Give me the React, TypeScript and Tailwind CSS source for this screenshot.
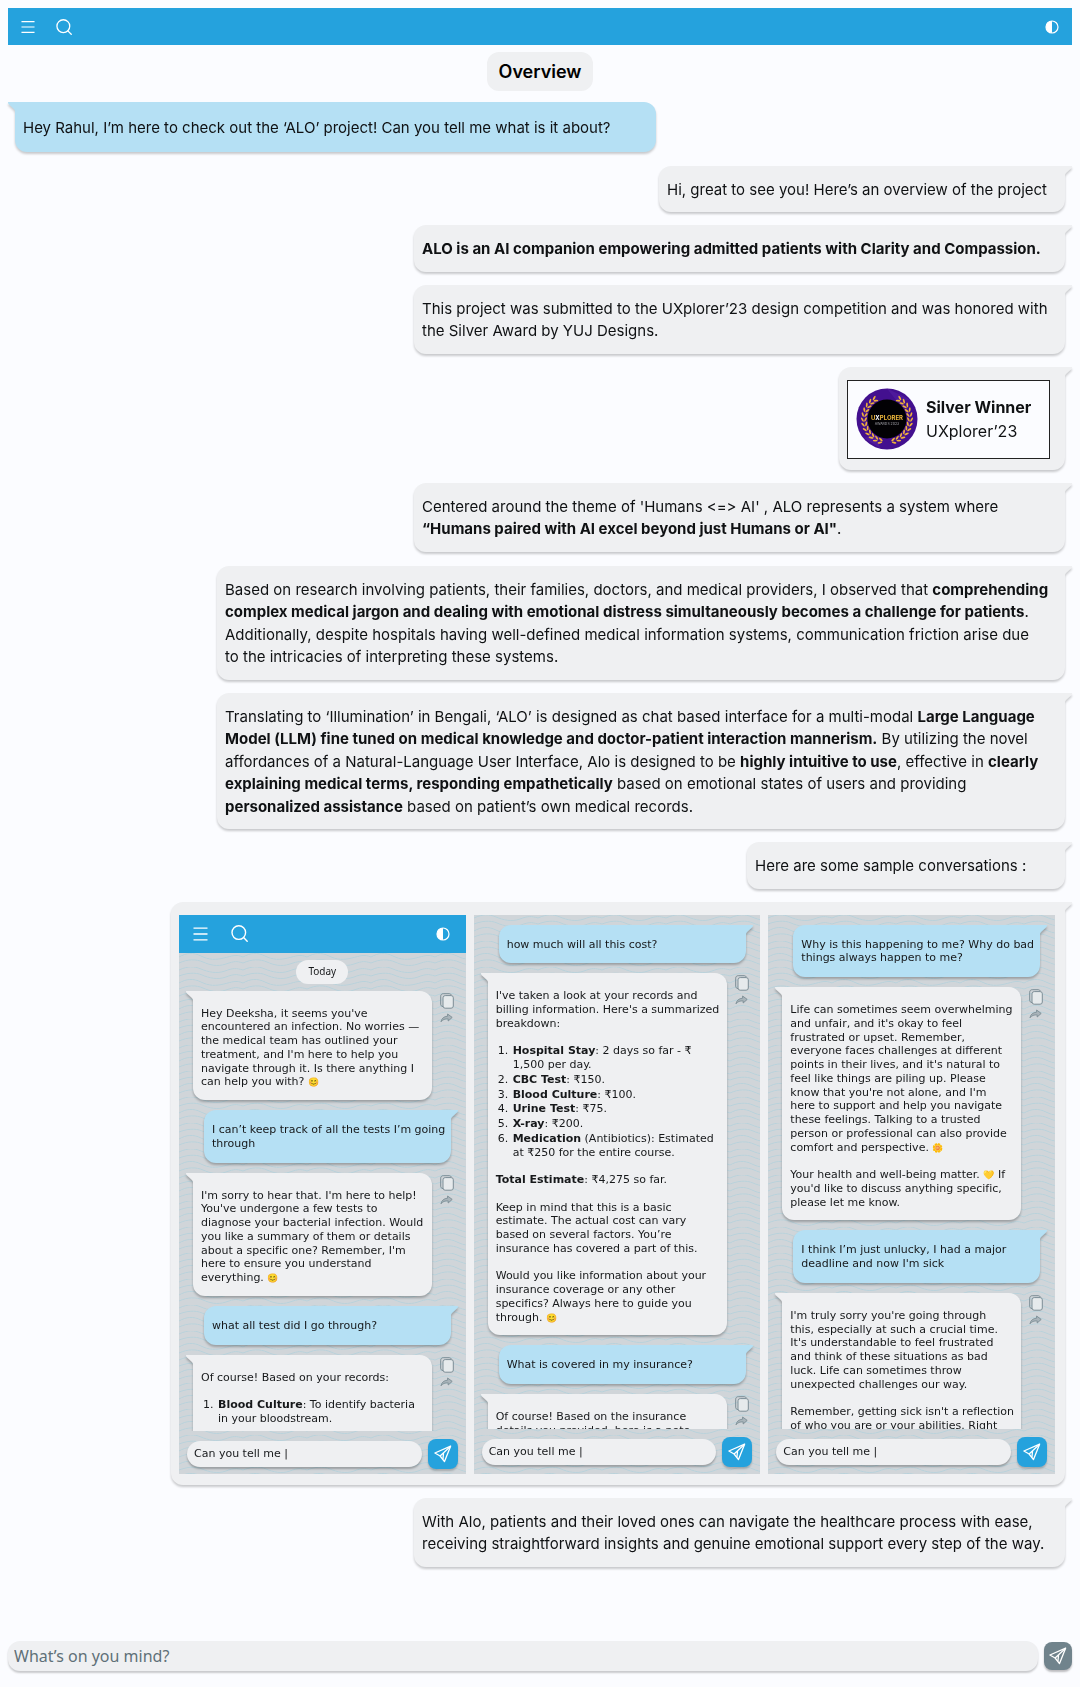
import type { ReactNode } from 'react';

type Side = 'left' | 'right';

function lines(text: ReactNode[]) {
  return text.map((line, i) => (
    <span key={i} className="block">
      {line === '' ? '\u00a0' : line}
    </span>
  ));
}

function Tail({ side, className }: { side: Side; className: string }) {
  return (
    <svg
      viewBox="0 0 8 9"
      preserveAspectRatio="none"
      aria-hidden="true"
      className={`absolute top-0 h-[9px] w-[7px] ${side === 'left' ? 'right-full -scale-x-100' : 'left-full'} ${className}`}
    >
      <path d="M0 0H7.5C8.3 0 8.1 1.2 7.4 1.9L1.6 6.8Q.4 7.6 0 9Z" fill="currentColor" />
    </svg>
  );
}

function Menu({ className }: { className: string }) {
  return (
    <svg viewBox="0 0 15 14" className={className} fill="none" stroke="currentColor" strokeWidth="1.3" aria-hidden="true">
      <path d="M.5 1.2h14M.5 7h14M.5 12.8h14" />
    </svg>
  );
}

function Search({ className }: { className: string }) {
  return (
    <svg viewBox="0 0 17 17" className={className} fill="none" stroke="currentColor" strokeWidth="1.4" strokeLinecap="round" aria-hidden="true">
      <circle cx="7.8" cy="7.6" r="6.8" />
      <path d="m12.6 12.6 3.6 3.6" />
    </svg>
  );
}

function Contrast({ className }: { className: string }) {
  return (
    <svg viewBox="0 0 14 14" className={className} aria-hidden="true">
      <circle cx="7" cy="7" r="6" fill="none" stroke="currentColor" strokeWidth="1.2" />
      <path d="M7 1a6 6 0 0 0 0 12Z" fill="currentColor" />
    </svg>
  );
}

function Plane({ className }: { className: string }) {
  return (
    <svg viewBox="0 0 18 18" className={className} fill="none" stroke="currentColor" strokeWidth="1.3" strokeLinejoin="round" aria-hidden="true">
      <path d="M16.6 1.2.9 8l5.2 3 4.4 5.6Z" />
      <path d="M16.6 1.2 6.1 11M16.6 1.2l-7 6.6-.7 6.6" />
    </svg>
  );
}

function CopyIcon() {
  return (
    <svg viewBox="0 0 14 16" className="h-4 w-3.5" fill="none" stroke="#7c8d95" aria-hidden="true">
      <rect x="3" y="2.6" width="10.3" height="12.6" rx="2.2" fill="#e6eaec" />
      <path d="M3 13.6C1.5 13.4.7 12.6.7 11.200V3.200C.7 1.700 1.700.7 3.200.7h6c1 0 1.900.5 2.300 1.400" />
    </svg>
  );
}

function ShareIcon() {
  return (
    <svg viewBox="0 0 13 10" className="h-[10px] w-[13px]" fill="#a9b4ba" stroke="#7c8d95" strokeWidth=".9" strokeLinejoin="round" aria-hidden="true">
      <path d="M7.600 1 12.200 4.400 8.200 8V5.900C5 5.700 2.800 6.500 1 8.800 1.600 5.400 4 3.400 7.600 3.200Z" />
    </svg>
  );
}

function Laurel() {
  const leaves = Array.from({ length: 12 }, (_, i) => 20 + i * 12);
  return (
    <svg viewBox="0 0 62 62" className="size-[62px] shrink-0" role="img" aria-label="UXplorer Awards 2023 badge">
      <circle cx="31" cy="31" r="30.5" fill="#43108f" />
      <path d="M31 .5 40 12 55 12Z M8 50 20 46 24 60Z" fill="#5a22a8" opacity=".5" />
      <circle cx="31" cy="31" r="19.500" fill="#020104" />
      {[1, -1].map((dir) => (
        <g key={dir} transform={dir === 1 ? undefined : 'translate(62 0) scale(-1 1)'} fill="#efb23a">
          {leaves.map((a) => (
            <g key={a} transform={`rotate(${a + 12} 31 31) translate(31 8)`}>
              <ellipse cx="-1" cy="-1.300" rx="2.400" ry=".9" transform="rotate(28)" />
              <ellipse cx="-1" cy="1.300" rx="2.400" ry=".9" transform="rotate(-28)" />
            </g>
          ))}
        </g>
      ))}
      <text x="31" y="31.500" textAnchor="middle" fontFamily="Inter, sans-serif" fontSize="6" fontWeight="700" fill="#f0b93c">
        U<tspan fill="#fff">X</tspan>PLORER
      </text>
      <text x="31" y="36.500" textAnchor="middle" fontFamily="Inter, sans-serif" fontSize="3.500" fill="#a9a9b0">
        AWARDS 2023
      </text>
    </svg>
  );
}

function Reply({ width, children, flush }: { width: string; children: ReactNode; flush?: boolean }) {
  return (
    <div
      className={`relative mr-[7px] max-w-full rounded-xl rounded-tr-none bg-[#eff0f2] pt-[13px] pb-[11px] pl-2 drop-shadow-[0_2px_1px_rgba(0,0,0,0.2)] ${flush ? 'pr-2.5' : ''} ${width}`}
    >
      {children}
      <Tail side="right" className="text-[#eff0f2]" />
    </div>
  );
}

function User({ children }: { children: ReactNode }) {
  return (
    <div className="relative ml-[25px] w-[247px] rounded-xl rounded-tr-none bg-[#b5e0f4] pt-[13px] pb-3 pl-2 drop-shadow-[0_2px_1px_rgba(0,0,0,0.25)]">
      {children}
      <Tail side="right" className="text-[#b5e0f4]" />
    </div>
  );
}

function Bot({ children }: { children: ReactNode }) {
  return (
    <div className="ml-3.5 flex items-start gap-2">
      <div className="relative w-[239px] rounded-xl rounded-tl-none bg-[#eff0f2] pt-4 pb-[11px] pl-2 drop-shadow-[0_2px_1px_rgba(0,0,0,0.25)]">
        {children}
        <Tail side="left" className="text-[#eff0f2]" />
      </div>
      <div className="flex flex-col gap-1 pt-0.5">
        <button type="button" aria-label="Copy message">
          <CopyIcon />
        </button>
        <button type="button" aria-label="Share message">
          <ShareIcon />
        </button>
      </div>
    </div>
  );
}

function Item({ n, children }: { n: number; children: ReactNode }) {
  return (
    <li className="flex">
      <span className="w-[17px] pl-0.5">{n}.</span>
      <div>{children}</div>
    </li>
  );
}

function Waves({ id }: { id: string }) {
  return (
    <svg className="absolute inset-0 h-full w-full" aria-hidden="true">
      <defs>
        <pattern id={id} width="64" height="26" patternUnits="userSpaceOnUse">
          <g fill="none" stroke="#b9d2db" strokeWidth="1">
            <path d="M0 3C9-1 15-1 22 2S38 7 46 4 57 1 64 3" />
            <path d="M0 9C8 6 16 5 23 8S39 13 47 10 57 7 64 9" />
            <path d="M0 16C7 12 14 11 22 15S37 19 45 17 57 13 64 16" />
            <path d="M0 22C9 18 17 18 24 21S38 26 47 23 57 20 64 22" />
          </g>
        </pattern>
      </defs>
      <rect width="100%" height="100%" fill={`url(#${id})`} />
    </svg>
  );
}

function Phone({ id, header, footer, children }: { id: string; header?: ReactNode; footer: string; children: ReactNode }) {
  return (
    <section
      aria-label={`Sample conversation ${id}`}
      className="relative flex h-[559px] flex-col overflow-hidden bg-[#d0d5d9] font-['DejaVu_Sans',sans-serif] text-[11px] leading-tight text-[#16181a]"
    >
      <Waves id={`waves-${id}`} />
      {header}
      <div className={`relative flex min-h-0 flex-1 flex-col gap-[10px] overflow-hidden ${header ? 'pt-[7px]' : 'pt-[10px]'}`}>{children}</div>
      <div className={`relative flex items-center gap-1.5 pt-2 pr-2 pl-2 ${footer}`}>
        <input
          type="text"
          aria-label="Message"
          defaultValue="Can you tell me |"
          className="h-[26px] min-w-0 flex-1 rounded-full bg-[#eff0f2] px-[7px] shadow-[0_2px_2px_rgba(0,0,0,0.25)] outline-none"
        />
        <button
          type="button"
          aria-label="Send"
          className="flex size-[30px] items-center justify-center rounded-lg bg-[#25a2dd] text-white shadow-[0_2px_2px_rgba(0,0,0,0.2)]"
        >
          <Plane className="size-[18px]" />
        </button>
      </div>
    </section>
  );
}

function Emoji({ children }: { children: string }) {
  return <span className="font-['Noto_Color_Emoji',sans-serif] text-[9px] leading-none">{children}</span>;
}

export default function App() {
  return (
    <div className="flex min-h-screen flex-col bg-[#fbfcff] p-2 font-['Inter',sans-serif] text-[15px] leading-normal text-[#0f1113] [font-variant-ligatures:none]">
      <header className="flex h-[37px] items-center bg-[#25a2dd] px-[13px] text-white">
        <button type="button" aria-label="Menu">
          <Menu className="h-3.5 w-3.5" />
        </button>
        <button type="button" aria-label="Search" className="ml-[21px]">
          <Search className="size-4" />
        </button>
        <button type="button" aria-label="Toggle theme" className="ml-auto">
          <Contrast className="size-3.5" />
        </button>
      </header>

      <h1 className="mt-[7px] flex h-[39px] items-center self-center rounded-xl bg-[#eff0f2] px-3 text-lg font-semibold text-black">Overview</h1>

      <div className="relative mt-[11px] ml-[7px] w-[641px] max-w-full rounded-xl rounded-tl-none bg-[#b5e0f4] pt-[15px] pb-3 pl-2 drop-shadow-[0_2px_1px_rgba(0,0,0,0.2)]">
        Hey Rahul, I’m here to check out the ‘ALO’ project! Can you tell me what is it about?
        <Tail side="left" className="text-[#b5e0f4]" />
      </div>

      <main className="mt-3.5 flex flex-col gap-3.5">
        <div className="flex flex-col items-end gap-[13px]">
          <Reply width="w-[406px]">Hi, great to see you! Here’s an overview of the project</Reply>
          <Reply width="w-[651px]">
            <b>ALO is an AI companion empowering admitted patients with Clarity and Compassion.</b>
          </Reply>
          <Reply width="w-[651px]">
            {lines(['This project was submitted to the UXplorer’23 design competition and was honored with', 'the Silver Award by YUJ Designs.'])}
          </Reply>
          <Reply width="w-[226px]">
            <div className="mr-[15px] flex h-[79px] items-center gap-2 border border-[#222] bg-[#fbfcff] pl-2 text-base leading-6">
              <Laurel />
              <div>
                {lines([<b>Silver Winner</b>, 'UXplorer’23'])}
              </div>
            </div>
          </Reply>
          <Reply width="w-[651px]">
            {lines([
              "Centered around the theme of 'Humans <=> AI' , ALO represents a system where",
              <>
                <b>“Humans paired with AI excel beyond just Humans or AI"</b>.
              </>,
            ])}
          </Reply>
        </div>

        <div className="flex flex-col items-end gap-[13px]">
          <Reply width="w-[848px]">
            {lines([
              <>
                Based on research involving patients, their families, doctors, and medical providers, I observed that <b>comprehending</b>
              </>,
              <>
                <b>complex medical jargon and dealing with emotional distress simultaneously becomes a challenge for patients</b>.
              </>,
              'Additionally, despite hospitals having well-defined medical information systems, communication friction arise due',
              'to the intricacies of interpreting these systems.',
            ])}
          </Reply>
          <Reply width="w-[848px]">
            {lines([
              <>
                Translating to ‘Illumination’ in Bengali, ‘ALO’ is designed as chat based interface for a multi-modal <b>Large Language</b>
              </>,
              <>
                <b>Model (LLM) fine tuned on medical knowledge and doctor-patient interaction mannerism.</b> By utilizing the novel
              </>,
              <>
                affordances of a Natural-Language User Interface, Alo is designed to be <b>highly intuitive to use</b>, effective in <b>clearly</b>
              </>,
              <>
                <b>explaining medical terms, responding empathetically</b> based on emotional states of users and providing
              </>,
              <>
                <b>personalized assistance</b> based on patient’s own medical records.
              </>,
            ])}
          </Reply>
          <Reply width="w-[318px]">Here are some sample conversations :</Reply>

          <Reply width="w-[894px]" flush>
            <div className="grid grid-cols-3 gap-2">
              <Phone
                id="1"
                footer="pb-[5px]"
                header={
                  <div className="relative flex h-[38px] shrink-0 items-center bg-[#25a2dd] pr-4 pl-3.5 text-white">
                    <button type="button" aria-label="Menu">
                      <Menu className="h-3.5 w-[15px]" />
                    </button>
                    <button type="button" aria-label="Search" className="ml-[23px]">
                      <Search className="size-[17px]" />
                    </button>
                    <button type="button" aria-label="Toggle theme" className="ml-auto">
                      <Contrast className="size-3.5" />
                    </button>
                  </div>
                }
              >
                <div className="-mb-[3px] flex h-6 shrink-0 items-center self-center rounded-full bg-[#eff0f2] px-3 font-['Noto_Sans',sans-serif] text-[10px]">
                  Today
                </div>
                <Bot>
                  {lines([
                    "Hey Deeksha, it seems you've",
                    'encountered an infection. No worries —',
                    'the medical team has outlined your',
                    "treatment, and I'm here to help you",
                    'navigate through it. Is there anything I',
                    <>
                      can help you with? <Emoji>😊</Emoji>
                    </>,
                  ])}
                </Bot>
                <User>{lines(['I can’t keep track of all the tests I’m going', 'through'])}</User>
                <Bot>
                  {lines([
                    "I'm sorry to hear that. I'm here to help!",
                    "You've undergone a few tests to",
                    'diagnose your bacterial infection. Would',
                    'you like a summary of them or details',
                    "about a specific one? Remember, I'm",
                    'here to ensure you understand',
                    <>
                      everything. <Emoji>😊</Emoji>
                    </>,
                  ])}
                </Bot>
                <User>what all test did I go through?</User>
                <Bot>
                  {lines(['Of course! Based on your records:', ''])}
                  <ol className="pb-4">
                    <Item n={1}>
                      {lines([
                        <>
                          <b>Blood Culture</b>: To identify bacteria
                        </>,
                        'in your bloodstream.',
                      ])}
                    </Item>
                  </ol>
                </Bot>
              </Phone>

              <Phone id="2" footer="pb-[7px]">
                <User>how much will all this cost?</User>
                <Bot>
                  {lines(["I've taken a look at your records and", "billing information. Here's a summarized", 'breakdown:', ''])}
                  <ol className="flex flex-col gap-px">
                    <Item n={1}>
                      {lines([
                        <>
                          <b>Hospital Stay</b>: 2 days so far - ₹
                        </>,
                        '1,500 per day.',
                      ])}
                    </Item>
                    <Item n={2}>
                      <b>CBC Test</b>: ₹150.
                    </Item>
                    <Item n={3}>
                      <b>Blood Culture</b>: ₹100.
                    </Item>
                    <Item n={4}>
                      <b>Urine Test</b>: ₹75.
                    </Item>
                    <Item n={5}>
                      <b>X-ray</b>: ₹200.
                    </Item>
                    <Item n={6}>
                      {lines([
                        <>
                          <b>Medication</b> (Antibiotics): Estimated
                        </>,
                        'at ₹250 for the entire course.',
                      ])}
                    </Item>
                  </ol>
                  {lines([
                    '',
                    <>
                      <b>Total Estimate</b>: ₹4,275 so far.
                    </>,
                    '',
                    'Keep in mind that this is a basic',
                    'estimate. The actual cost can vary',
                    'based on several factors. You’re',
                    'insurance has covered a part of this.',
                    '',
                    'Would you like information about your',
                    'insurance coverage or any other',
                    'specifics? Always here to guide you',
                    <>
                      through. <Emoji>😊</Emoji>
                    </>,
                  ])}
                </Bot>
                <User>What is covered in my insurance?</User>
                <Bot>{lines(['Of course! Based on the insurance', 'details you provided, here is a note'])}</Bot>
              </Phone>

              <Phone id="3" footer="pb-[7px]">
                <User>{lines(['Why is this happening to me? Why do bad', 'things always happen to me?'])}</User>
                <Bot>
                  {lines([
                    'Life can sometimes seem overwhelming',
                    "and unfair, and it's okay to feel",
                    'frustrated or upset. Remember,',
                    'everyone faces challenges at different',
                    "points in their lives, and it's natural to",
                    'feel like things are piling up. Please',
                    "know that you're not alone, and I'm",
                    'here to support and help you navigate',
                    'these feelings. Talking to a trusted',
                    'person or professional can also provide',
                    <>
                      comfort and perspective. <Emoji>🌼</Emoji>
                    </>,
                    '',
                    <>
                      Your health and well-being matter. <Emoji>💛</Emoji> If
                    </>,
                    "you'd like to discuss anything specific,",
                    'please let me know.',
                  ])}
                </Bot>
                <User>{lines(['I think I’m just unlucky, I had a major', "deadline and now I'm sick"])}</User>
                <Bot>
                  {lines([
                    "I'm truly sorry you're going through",
                    'this, especially at such a crucial time.',
                    "It's understandable to feel frustrated",
                    'and think of these situations as bad',
                    'luck. Life can sometimes throw',
                    'unexpected challenges our way.',
                    '',
                    "Remember, getting sick isn't a reflection",
                    'of who you are or your abilities. Right',
                  ])}
                </Bot>
              </Phone>
            </div>
          </Reply>

          <Reply width="w-[651px]">
            {lines([
              'With Alo, patients and their loved ones can navigate the healthcare process with ease,',
              'receiving straightforward insights and genuine emotional support every step of the way.',
            ])}
          </Reply>
        </div>
      </main>

      <form className="mt-auto mb-2 flex items-center gap-1.5 pt-16">
        <input
          type="text"
          aria-label="Message"
          placeholder="What’s on you mind?"
          className="h-[30px] min-w-0 flex-1 rounded-xl bg-[#eff0f2] px-1.5 font-['Noto_Sans',sans-serif] text-base shadow-[0_2px_2px_rgba(0,0,0,0.2)] outline-none placeholder:text-[#5f7078]"
        />
        <button
          type="button"
          aria-label="Send"
          className="flex size-7 items-center justify-center rounded-lg bg-[#70838c] text-white shadow-[0_2px_2px_rgba(0,0,0,0.25)]"
        >
          <Plane className="size-[18px]" />
        </button>
      </form>
    </div>
  );
}
